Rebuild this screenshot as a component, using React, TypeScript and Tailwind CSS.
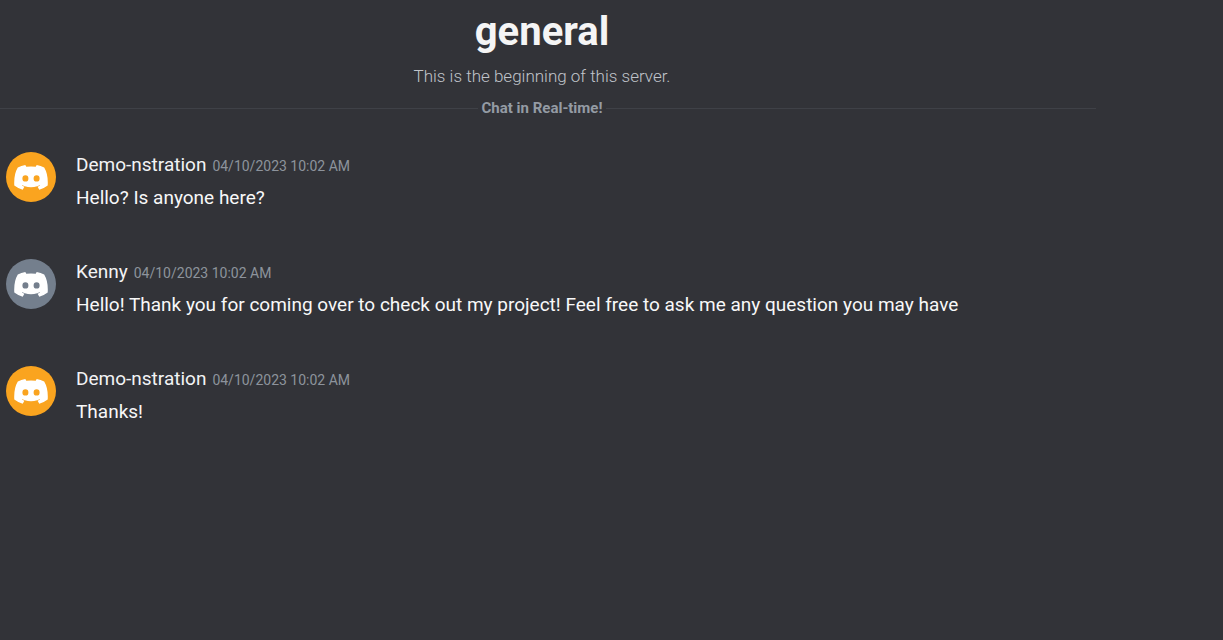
type Message = {
  id: number;
  author: string;
  time: string;
  text: string;
  avatar: string;
};

const messages: Message[] = [
  {
    id: 1,
    author: "Demo-nstration",
    time: "04/10/2023 10:02 AM",
    text: "Hello? Is anyone here?",
    avatar: "bg-[#faa41f]",
  },
  {
    id: 2,
    author: "Kenny",
    time: "04/10/2023 10:02 AM",
    text: "Hello! Thank you for coming over to check out my project! Feel free to ask me any question you may have",
    avatar: "bg-[#747f8d]",
  },
  {
    id: 3,
    author: "Demo-nstration",
    time: "04/10/2023 10:02 AM",
    text: "Thanks!",
    avatar: "bg-[#faa41f]",
  },
];

function DiscordMark() {
  return (
    <svg width="34" height="26" viewBox="0 0 34 26" fill="white" aria-hidden="true">
      <path
        fillRule="evenodd"
        d="M11.3 1 12.3 2.8Q17 2 21.7 2.8L22.7 1Q26.7 1.7 30.2 3.5Q34.4 10.5 33.7 21.5Q30 24.4 25.3 25.7L23.6 22.8L26.2 21.5Q26 21 25.6 21.2L23.2 22.2Q17 24.4 10.8 22.2L8.4 21.2Q8 21 7.8 21.5L10.4 22.8L8.7 25.7Q4 24.4 .3 21.5Q-.4 10.5 3.8 3.5Q7.3 1.7 11.3 1ZM11.4 11.2A3 3.2 0 1 0 11.4 17.6A3 3.2 0 1 0 11.4 11.2ZM22.6 11.2A3 3.2 0 1 0 22.6 17.6A3 3.2 0 1 0 22.6 11.2Z"
      />
    </svg>
  );
}

function MessageRow({ message }: { message: Message }) {
  return (
    <li className="flex gap-5">
      <div
        className={`mt-1 flex size-[50px] shrink-0 items-center justify-center rounded-full ${message.avatar}`}
      >
        <DiscordMark />
      </div>
      <div className="min-w-0">
        <div className="flex items-baseline gap-1.5 leading-[34px]">
          <span className="text-[19px] text-[#f2f3f5]">{message.author}</span>
          <time className="text-sm text-[#8d939c]">{message.time}</time>
        </div>
        <p className="text-[19px] leading-8 text-[#f8f8f8]">{message.text}</p>
      </div>
    </li>
  );
}

export default function App() {
  return (
    <main className="min-h-screen overflow-x-hidden bg-[#323338] font-['Roboto','Noto_Sans',sans-serif]">
      <header className="-ml-3 flex max-w-[1108px] flex-col items-center pt-2">
        <h1 className="text-[40px] leading-12 font-bold text-[#f5f5f5]">general</h1>
        <p className="mt-2 text-[17px] leading-6 font-light text-[#c0c4ca]">
          This is the beginning of this server.
        </p>
        <div className="mt-2 flex w-full items-center gap-1">
          <span className="h-px flex-1 bg-[#3f4147]" />
          <span className="text-[15px] leading-6 font-bold text-[#949ba4]">Chat in Real-time!</span>
          <span className="h-px flex-1 bg-[#3f4147]" />
        </div>
      </header>
      <ul className="mt-7 flex flex-col gap-[41px] pl-1.5">
        {messages.map((message) => (
          <MessageRow key={message.id} message={message} />
        ))}
      </ul>
    </main>
  );
}
